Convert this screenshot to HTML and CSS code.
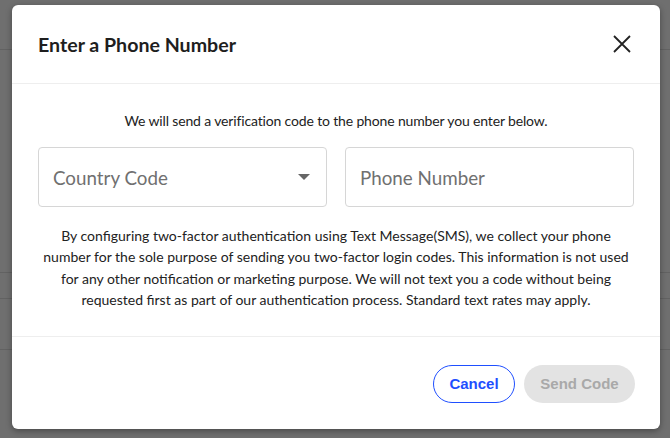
FILE: index.html
```html
<!DOCTYPE html>
<html lang="en">
<head>
    <meta charset="UTF-8">
    <meta name="viewport" content="width=device-width, initial-scale=1.0">
    <title>Enter a Phone Number</title>
    <link rel="stylesheet" href="styles.css">
</head>
<body>

    <div class="backdrop">
        <div class="page-lines">
            <div class="line l1"></div>
            <div class="line l2"></div>
            <div class="line l3"></div>
            <div class="line l4"></div>
        </div>
    </div>

    <div class="modal">
        <div class="modal-header">
            <h2>Enter a Phone Number</h2>
            <button class="close-btn" aria-label="Close">
                <svg width="20" height="20" viewBox="0 0 20 20">
                    <path d="M2 2 L18 18 M18 2 L2 18" stroke="#222" stroke-width="1.8" fill="none"/>
                </svg>
            </button>
        </div>

        <div class="modal-body">
            <p class="intro">We will send a verification code to the phone number you enter below.</p>

            <div class="fields">
                <div class="field select">
                    <span class="placeholder">Country Code</span>
                    <span class="caret"></span>
                </div>
                <div class="field">
                    <span class="placeholder">Phone Number</span>
                </div>
            </div>

            <p class="notice">By configuring two-factor authentication using Text Message(SMS), we collect your phone number for the sole purpose of sending you two-factor login codes. This information is not used for any other notification or marketing purpose. We will not text you a code without being requested first as part of our authentication process. Standard text rates may apply.</p>
        </div>

        <div class="modal-footer">
            <button class="btn btn-outline">Cancel</button>
            <button class="btn btn-disabled">Send Code</button>
        </div>
    </div>

</body>
</html>
```

FILE: styles.css
```css
body {
    margin: 0;
    padding: 0;
    width: 670px;
    height: 438px;
    overflow: hidden;
    background-color: #6f6f6f;
    font-family: 'Lato', 'Liberation Sans', sans-serif;
    position: relative;
}

.backdrop {
    position: absolute;
    inset: 0;
    background-color: #6f6f6f;
}

.page-lines .line {
    height: 1px;
    background-color: #626262;
    margin-top: 48px;
}

.page-lines .l1 { margin-top: 49px; }
.page-lines .l2 { margin-top: 222px; }
.page-lines .l3 { margin-top: 25px; }
.page-lines .l4 { margin-top: 50px; }

.modal {
    position: absolute;
    left: 12px;
    top: 5px;
    width: 648px;
    height: 424px;
    background-color: #fff;
    border-radius: 6px;
    box-shadow: 0 2px 6px rgba(0, 0, 0, 0.35);
    display: flex;
    flex-direction: column;
}

.modal-header {
    height: 78px;
    display: flex;
    align-items: center;
    justify-content: space-between;
    padding: 0 28px 0 26px;
    border-bottom: 1px solid #eeeeee;
}

.modal-header h2 {
    margin: 0;
    font-size: 19.6px;
    font-weight: bold;
    color: #1e1e1e;
}

.close-btn {
    background: none;
    border: none;
    padding: 0;
    width: 20px;
    height: 20px;
    cursor: pointer;
}

.modal-body {
    padding: 27px 26px 25px;
    border-bottom: 1px solid #eeeeee;
    text-align: center;
}

.intro {
    margin: 0;
    font-size: 14px;
    line-height: 20px;
    letter-spacing: -0.15px;
    color: #222;
}

.fields {
    display: flex;
    gap: 18px;
    margin-top: 16px;
}

.field {
    flex: 1;
    height: 58px;
    border: 1px solid #d6d6d6;
    border-radius: 4px;
    display: flex;
    align-items: center;
    justify-content: space-between;
    padding: 0 15px 0 14px;
    text-align: left;
}

.placeholder {
    font-size: 18.8px;
    color: #707070;
}

.caret {
    width: 0;
    height: 0;
    border-left: 6px solid transparent;
    border-right: 6px solid transparent;
    border-top: 6px solid #666;
    margin-right: 1px;
}

.notice {
    margin: 18px 0 0;
    font-size: 14px;
    line-height: 21.4px;
    color: #222;
}

.modal-footer {
    flex: 1;
    display: flex;
    align-items: center;
    justify-content: flex-end;
    gap: 9px;
    padding: 2px 25px 0 0;
}

.btn {
    height: 38px;
    border-radius: 19px;
    font-family: 'Liberation Sans', Arial, sans-serif;
    font-size: 15px;
    font-weight: bold;
    cursor: pointer;
}

.btn-outline {
    width: 82px;
    background-color: #fff;
    border: 1.5px solid #1f4fff;
    color: #1f4fff;
}

.btn-disabled {
    width: 111px;
    background-color: #e3e3e3;
    border: none;
    color: #a9a9a9;
}
```
